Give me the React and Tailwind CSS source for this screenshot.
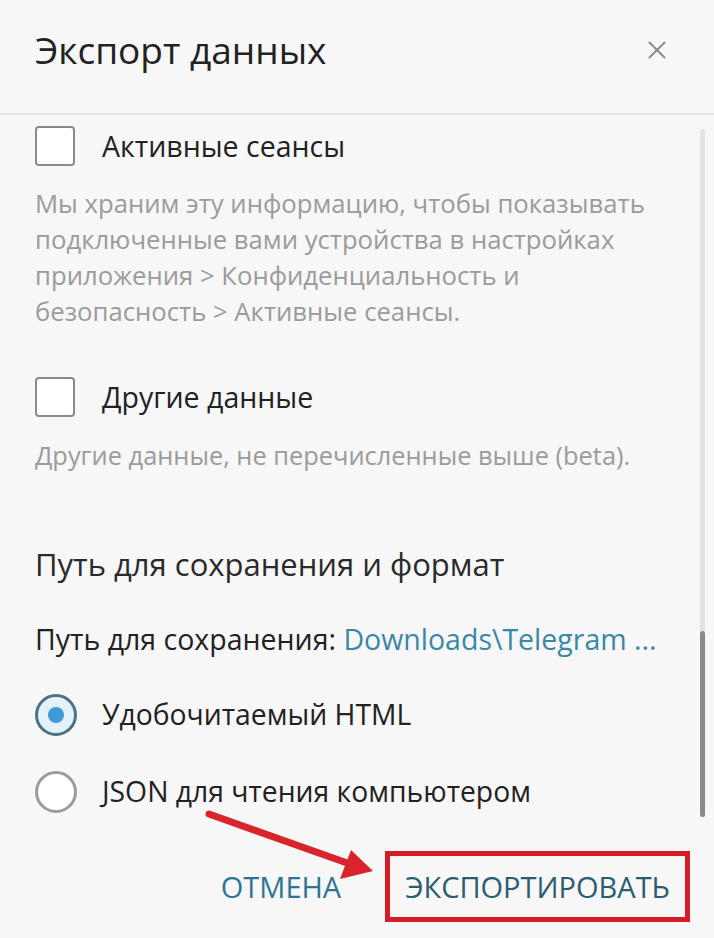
import { X } from "lucide-react";

const Checkbox = () => (
  <span className="block h-[40px] w-[40px] shrink-0 rounded-[4px] border-[2px] border-[#8a8a8a] bg-white" />
);

const Radio = ({ checked }) =>
  checked ? (
    <span className="flex h-[42px] w-[42px] shrink-0 items-center justify-center rounded-full border-[3px] border-[#4d7282] bg-[#e4f2f8]">
      <span className="block h-[16px] w-[16px] rounded-full bg-[#3d9ad6]" />
    </span>
  ) : (
    <span className="block h-[42px] w-[42px] shrink-0 rounded-full border-[3px] border-[#9c9c9c] bg-white" />
  );

const App = () => {
  return (
    <div className="relative flex h-[938px] w-[714px] flex-col overflow-hidden bg-[#f7f7f7] text-[#222] [font-family:'Open_Sans',sans-serif]">
      <header className="flex h-[115px] shrink-0 items-center justify-between border-b-[2px] border-[#e2e2e2] pl-[35px] pr-[42px]">
        <h1 className="pb-[14px] text-[37px] leading-none">Экспорт данных</h1>
        <X className="mb-[14px] h-[30px] w-[30px] text-[#8c8c8c]" strokeWidth={1.6} />
      </header>

      <div className="flex flex-1">
        <div className="flex-1 pl-[35px] pr-[30px]">
          <div className="mt-[11px] flex items-center gap-[27px]">
            <Checkbox />
            <span className="text-[28.5px] leading-none">Активные сеансы</span>
          </div>
          <p className="mt-[20px] text-[25.7px] leading-[36px] text-[#9b9b9b]">
            Мы храним эту информацию, чтобы показывать подключенные вами устройства в настройках
            приложения &gt; Конфиденциальность и безопасность &gt; Активные сеансы.
          </p>

          <div className="mt-[47px] flex items-center gap-[27px]">
            <Checkbox />
            <span className="text-[28.5px] leading-none">Другие данные</span>
          </div>
          <p className="mt-[20px] text-[25.4px] leading-[36px] text-[#9b9b9b]">
            Другие данные, не перечисленные выше (beta).
          </p>

          <h2 className="mt-[76px] text-[31px] leading-none text-[#2a2a2a]">Путь для сохранения и формат</h2>

          <p className="mt-[45px] whitespace-nowrap text-[28.5px] leading-none">
            Путь для сохранения: <span className="text-[#3a88a8]">Downloads\Telegram ...</span>
          </p>

          <div className="mt-[40px] flex items-center gap-[25px]">
            <Radio checked />
            <span className="text-[28.3px] leading-none">Удобочитаемый HTML</span>
          </div>
          <div className="mt-[35px] flex items-center gap-[25px]">
            <Radio />
            <span className="text-[28.3px] leading-none">JSON для чтения компьютером</span>
          </div>
        </div>
        <div className="mr-[9px] mt-[14px] flex h-[688px] w-[5px] flex-col rounded-full bg-[#e3e3e3]">
          <div className="mt-auto h-[186px] w-full rounded-full bg-[#8a8a8a]" />
        </div>
      </div>

      <footer className="flex h-[120px] shrink-0 items-start justify-end gap-[44px] pr-[24px] pt-[33px] text-[29px] uppercase leading-none">
        <span className="mt-[21px] text-[#2d7594]">Отмена</span>
        <span className="border-[5px] border-[#d61c24] px-[15px] py-[16px] text-[#2b5d70]">Экспортировать</span>
      </footer>

      <svg className="pointer-events-none absolute left-0 top-0" width="714" height="938">
        <line x1="209" y1="814" x2="350" y2="864" stroke="#d8242a" strokeWidth="7" strokeLinecap="round" />
        <polygon points="373,871 340,879 351,850" fill="#d8242a" />
      </svg>
    </div>
  );
};

export default App;
